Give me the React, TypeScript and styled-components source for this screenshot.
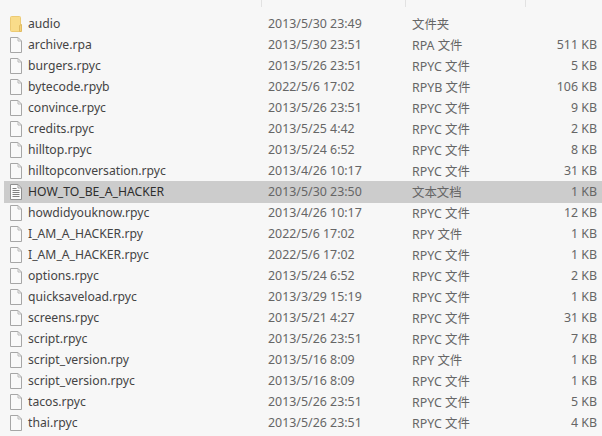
import React from 'react';
import styled, { createGlobalStyle } from 'styled-components';

const GlobalStyle = createGlobalStyle`
  html, body {
    margin: 0;
    padding: 0;
    background: #f7f7f7;
  }
`;

const Page = styled.div`
  width: 602px;
  height: 436px;
  overflow: hidden;
  background: #f7f7f7;
  font-family: "Noto Sans", "Noto Sans CJK SC", sans-serif;
  font-size: 12.4px;
  color: #666;
`;

const HeaderStrip = styled.div`
  display: grid;
  grid-template-columns: 262px 144px 120px 1fr;
  height: 7px;
  margin-bottom: 6px;
`;

const HeaderCell = styled.div`
  border-right: 1px solid #e2e2e2;
`;

const List = styled.div`
  display: flex;
  flex-direction: column;
`;

const Row = styled.div<{ $selected?: boolean }>`
  display: grid;
  grid-template-columns: 264px 144px 108px 77px;
  align-items: center;
  height: 21px;
  margin-left: 4px;
  background: ${p => (p.$selected ? '#cccccc' : 'transparent')};
  box-shadow: ${p => (p.$selected ? '0 1px 0 #cccccc' : 'none')};
`;

const NameCell = styled.div<{ $selected?: boolean }>`
  display: flex;
  align-items: center;
  gap: 6px;
  padding-left: 6px;
  font-size: 12.2px;
  color: ${p => (p.$selected ? '#2e2e2e' : '#444')};
  white-space: nowrap;
`;

const DateCell = styled.div`
  white-space: nowrap;
`;

const TypeCell = styled.div`
  white-space: nowrap;
`;

const SizeCell = styled.div`
  text-align: right;
  white-space: nowrap;
`;

const FolderIcon = () => (
  <svg width="12" height="16" viewBox="0 0 12 16">
    <path d="M.5 1.5a1 1 0 0 1 1-1h8a1 1 0 0 1 1 1v14h-9a1 1 0 0 1-1-1z" fill="#f9dc8a" stroke="#ecca74" />
    <path d="M9.5 15.5v-6l2-1v7z" fill="#f5d279" stroke="#e0bb62" />
  </svg>
);

const FileIcon = () => (
  <svg width="12" height="16" viewBox="0 0 12 16">
    <path d="M.5.5h7.5l3.5 3.5v11.5h-11z" fill="#f9f9f9" stroke="#a6a6a6" />
    <path d="M8 .5v3.5h3.5" fill="none" stroke="#b8b8b8" />
  </svg>
);

const TextIcon = () => (
  <svg width="12" height="16" viewBox="0 0 12 16">
    <path d="M.5.5h7.5l3.5 3.5v11.5h-11z" fill="#fbfbfb" stroke="#8f8f8f" />
    <path d="M8 .5v3.5h3.5" fill="none" stroke="#a0a0a0" />
    <path d="M2.5 4.5h4M2.5 6.5h7M2.5 8.5h7M2.5 10.5h7M2.5 12.5h7" stroke="#808080" fill="none" />
  </svg>
);

interface Entry {
  name: string;
  date: string;
  type: string;
  size: string;
  kind?: 'folder' | 'text';
}

const entries: Entry[] = [
  { name: 'audio', date: '2013/5/30 23:49', type: '文件夹', size: '', kind: 'folder' },
  { name: 'archive.rpa', date: '2013/5/30 23:51', type: 'RPA 文件', size: '511 KB' },
  { name: 'burgers.rpyc', date: '2013/5/26 23:51', type: 'RPYC 文件', size: '5 KB' },
  { name: 'bytecode.rpyb', date: '2022/5/6 17:02', type: 'RPYB 文件', size: '106 KB' },
  { name: 'convince.rpyc', date: '2013/5/26 23:51', type: 'RPYC 文件', size: '9 KB' },
  { name: 'credits.rpyc', date: '2013/5/25 4:42', type: 'RPYC 文件', size: '2 KB' },
  { name: 'hilltop.rpyc', date: '2013/5/24 6:52', type: 'RPYC 文件', size: '8 KB' },
  { name: 'hilltopconversation.rpyc', date: '2013/4/26 10:17', type: 'RPYC 文件', size: '31 KB' },
  { name: 'HOW_TO_BE_A_HACKER', date: '2013/5/30 23:50', type: '文本文档', size: '1 KB', kind: 'text' },
  { name: 'howdidyouknow.rpyc', date: '2013/4/26 10:17', type: 'RPYC 文件', size: '12 KB' },
  { name: 'I_AM_A_HACKER.rpy', date: '2022/5/6 17:02', type: 'RPY 文件', size: '1 KB' },
  { name: 'I_AM_A_HACKER.rpyc', date: '2022/5/6 17:02', type: 'RPYC 文件', size: '1 KB' },
  { name: 'options.rpyc', date: '2013/5/24 6:52', type: 'RPYC 文件', size: '2 KB' },
  { name: 'quicksaveload.rpyc', date: '2013/3/29 15:19', type: 'RPYC 文件', size: '1 KB' },
  { name: 'screens.rpyc', date: '2013/5/21 4:27', type: 'RPYC 文件', size: '31 KB' },
  { name: 'script.rpyc', date: '2013/5/26 23:51', type: 'RPYC 文件', size: '7 KB' },
  { name: 'script_version.rpy', date: '2013/5/16 8:09', type: 'RPY 文件', size: '1 KB' },
  { name: 'script_version.rpyc', date: '2013/5/16 8:09', type: 'RPYC 文件', size: '1 KB' },
  { name: 'tacos.rpyc', date: '2013/5/26 23:51', type: 'RPYC 文件', size: '5 KB' },
  { name: 'thai.rpyc', date: '2013/5/26 23:51', type: 'RPYC 文件', size: '4 KB' },
];

const App = () => (
  <Page>
    <GlobalStyle />
    <HeaderStrip>
      <HeaderCell />
      <HeaderCell />
      <HeaderCell />
    </HeaderStrip>
    <List>
      {entries.map(entry => (
        <Row key={entry.name} $selected={entry.kind === 'text'}>
          <NameCell $selected={entry.kind === 'text'}>
            {entry.kind === 'folder' ? <FolderIcon /> : entry.kind === 'text' ? <TextIcon /> : <FileIcon />}
            {entry.name}
          </NameCell>
          <DateCell>{entry.date}</DateCell>
          <TypeCell>{entry.type}</TypeCell>
          <SizeCell>{entry.size}</SizeCell>
        </Row>
      ))}
    </List>
  </Page>
);

export default App;
